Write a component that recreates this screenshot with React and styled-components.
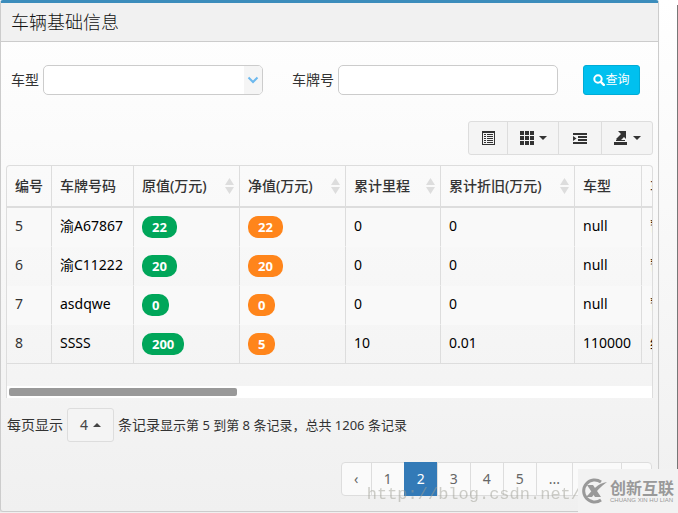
import React from 'react'
import styled, { createGlobalStyle, css } from 'styled-components'

const GlobalStyle = createGlobalStyle`
    * {
        box-sizing: border-box;
    }

    body {
        margin: 0;
        color: #333;
        background: linear-gradient(#fff, #f0f0f0) no-repeat #f0f0f0;
        font-family: 'Noto Sans', 'Noto Sans CJK SC', sans-serif;
        font-size: 14px;
        line-height: 20px;
    }

    button,
    input,
    select {
        font: inherit;
        color: inherit;
    }
`

const Page = styled.div`
    display: flex;
    overflow: hidden;
`

const Gutter = styled.div`
    flex: 0 0 19px;
    margin-top: 5px;
    border-right: 1px solid #777;
`

const Panel = styled.section`
    flex: 1;
    min-width: 0;
    border: 1px solid #ccc;
    border-top: 3px solid #3c8dbc;
    border-radius: 3px;
    box-shadow: 0 1px 1px rgba(0, 0, 0, 0.1);
`

const PanelHeader = styled.header`
    padding: 8px 10px;
    background: #f1f1f1;
    border-bottom: 1px solid #ccc;
`

const Title = styled.h3`
    margin: 0;
    color: #111;
    font-size: 18px;
    font-weight: 300;
    line-height: 22px;
`

const PanelBody = styled.div`
    padding: 23px 5px 15px;
`

const SearchForm = styled.form`
    display: flex;
    align-items: center;
    padding-left: 5px;
`

const Field = styled.div`
    display: flex;
    align-items: center;
    gap: 4px;
    margin-right: ${(props) => props.$gap}px;
`

const control = css`
    width: 220px;
    height: 30px;
    padding: 0 8px;
    background: #fff;
    border: 1px solid #ccc;
    border-radius: 5px;
    outline: none;
`

const TextInput = styled.input`
    ${control}
`

const SelectBox = styled.div`
    display: grid;
    grid-template-columns: 1fr 18px;
    align-items: center;
    overflow: hidden;
    ${control}
    padding: 0;
`

const Select = styled.select`
    grid-area: 1 / 1 / 2 / 3;
    height: 28px;
    border: 0;
    background: linear-gradient(#f5f5f5, #f5f5f5) no-repeat right / 18px 100%;
    appearance: none;
    outline: none;
`

const SelectArrow = styled.svg`
    grid-area: 1 / 2;
    justify-self: center;
    pointer-events: none;
`

const SearchButton = styled.button`
    display: flex;
    align-items: center;
    justify-content: center;
    width: 57px;
    height: 30px;
    padding: 0;
    color: #fff;
    font-size: 12px;
    background: #00c0ef;
    border: 1px solid #00acd6;
    border-radius: 3px;
`

const Toolbar = styled.div`
    display: flex;
    justify-content: flex-end;
    margin: 26px 0 10px;
`

const ToolButton = styled.button`
    display: flex;
    align-items: center;
    justify-content: center;
    gap: 5px;
    width: ${(props) => (props.$menu ? 52 : 40)}px;
    height: 34px;
    padding: 0;
    color: #333;
    background: #f4f4f4;
    border: 1px solid #ddd;

    & + & {
        margin-left: -1px;
    }

    &:first-child {
        border-radius: 3px 0 0 3px;
    }

    &:last-child {
        border-radius: 0 3px 3px 0;
    }

    &:nth-child(3) {
        width: 44px;
    }
`

const TableBox = styled.div`
    overflow: hidden;
    border: 1px solid #ddd;
    border-bottom: 0;
    border-radius: 4px 4px 0 0;
`

const Table = styled.table`
    width: 1800px;
    table-layout: fixed;
    border-collapse: separate;
    border-spacing: 0;
    margin-bottom: 22px;
`

const Th = styled.th`
    padding: 10px 8px;
    text-align: left;
    white-space: nowrap;
    font-weight: 500;
    border-right: 1px solid #ddd;
    border-bottom: 2px solid #ddd;
`

const ThInner = styled.div`
    display: flex;
    align-items: center;
    justify-content: space-between;
    margin-right: -3px;
`

const Row = styled.tr`
    background: ${(props) => (props.$odd ? '#f9f9f9' : 'transparent')};

    &:last-child td {
        border-bottom-color: #ddd;
    }
`

const Td = styled.td`
    padding: 7px 8px 8px;
    color: ${(props) => (props.$muted ? '#333' : '#000')};
    line-height: 22px;
    vertical-align: top;
    white-space: nowrap;
    border-right: 1px solid #ddd;
    border-bottom: 1px solid transparent;
`

const Badge = styled.span`
    display: inline-block;
    margin-top: 1px;
    padding: 0 10px;
    color: #fff;
    font-size: 13px;
    font-weight: 700;
    line-height: 22px;
    vertical-align: top;
    background: ${(props) => props.$color};
    border-radius: 10px;
`

const ScrollTrack = styled.div`
    padding: 2px;
    background: #fff;
`

const ScrollThumb = styled.div`
    width: 228px;
    height: 8px;
    background: #999;
    border-radius: 2px;
`

const PageInfo = styled.div`
    display: flex;
    align-items: center;
    gap: 4px;
    margin: 10px 0 20px 1px;
`

const PageSize = styled.button`
    display: flex;
    align-items: center;
    justify-content: center;
    gap: 5px;
    width: 47px;
    height: 34px;
    padding: 0;
    color: #444;
    background: #f4f4f4;
    border: 1px solid #ddd;
    border-radius: 3px;
`

const Summary = styled.span`
    font-size: 13px;
`

const Pagination = styled.ul`
    display: flex;
    justify-content: flex-end;
    margin: 0 1px 0 0;
    padding: 0;
    list-style: none;
`

const PageLink = styled.a`
    display: block;
    min-width: 31px;
    margin-left: -1px;
    padding: 6px 12px;
    text-align: center;
    text-decoration: none;
    color: ${(props) => (props.$active ? '#fff' : '#666')};
    background: ${(props) => (props.$active ? '#337ab7' : '#fafafa')};
    border: 1px solid ${(props) => (props.$active ? '#337ab7' : '#ddd')};

    li:first-child & {
        border-radius: 4px 0 0 4px;
    }

    li:last-child & {
        border-radius: 0 4px 4px 0;
    }
`

const SiteUrl = styled.div`
    position: fixed;
    right: 97px;
    bottom: 6px;
    color: rgba(160, 160, 150, 0.5);
    font-family: 'Liberation Mono', monospace;
    font-size: 17px;
    line-height: 24px;
    pointer-events: none;
`

const Brand = styled.div`
    position: fixed;
    right: 0;
    bottom: 0;
    display: flex;
    align-items: center;
    gap: 3px;
    width: 100px;
    height: 44px;
    padding-left: 2px;
    color: #999;
    background: #f2f2f2;
`

const BrandName = styled.div`
    font-size: 16px;
    font-weight: 700;
    line-height: 18px;
    white-space: nowrap;
`

const BrandSub = styled.div`
    font-family: 'Liberation Sans', sans-serif;
    font-size: 6px;
    line-height: 6px;
    white-space: nowrap;
`

const Caret = ({ up }) => (
    <svg width="8" height="4" viewBox="0 0 8 4" fill="currentColor">
        <path d={up ? 'M0 4 4 0 8 4z' : 'M0 0h8L4 4z'} />
    </svg>
)

const SortIcon = () => (
    <svg width="9" height="16" viewBox="0 0 9 16" fill="#ddd">
        <path d="M0 7 4.5 0 9 7zM0 9h9l-4.500 7z" />
    </svg>
)

const SearchIcon = () => (
    <svg width="12" height="12" viewBox="0 0 12 12" fill="none" stroke="currentColor">
        <circle cx="5" cy="5" r="3.700" strokeWidth="2" />
        <path d="m7.800 7.800 3 3" strokeWidth="2.400" strokeLinecap="round" />
    </svg>
)

const ListIcon = () => (
    <svg width="13" height="14" viewBox="0 0 13 14" fill="currentColor">
        <path
            fillRule="evenodd"
            d="M0 0h13v14H0zM1 2v11h11V2zM2 3h2v1H2zM5 3h6v1H5zM2 5h2v1H2zM5 5h6v1H5zM2 7h2v1H2zM5 7h6v1H5zM2 9h2v1H2zM5 9h6v1H5zM2 11h2v1H2zM5 11h6v1H5z"
        />
    </svg>
)

const GridIcon = () => (
    <svg width="14" height="14" viewBox="0 0 14 14" fill="currentColor">
        {[0, 5, 10].map((y) => [0, 5, 10].map((x) => (
            <rect key={`${x}-${y}`} x={x} y={y} width="4" height="4" />
        )))}
    </svg>
)

const IndentIcon = () => (
    <svg width="14" height="11" viewBox="0 0 14 11" fill="currentColor">
        <path d="M0 0h14v2H0zM5 3h9v2H5zM5 6h9v2H5zM0 9h14v2H0zM0 3l3.500 2.500L0 8z" />
    </svg>
)

const ExportIcon = () => (
    <svg width="14" height="14" viewBox="0 0 14 14" fill="currentColor">
        <path d="M0 11h13v3H0zM2 9h9v1H2zM4 0h8v8L10 6 7 9H3L2 8 7 3z" />
    </svg>
)

const BrandIcon = () => (
    <svg width="27" height="26" viewBox="0 0 27 26" fill="none" stroke="currentColor">
        <path d="M21 4A11 11 0 1 0 21 22" strokeWidth="3" />
        <path d="M7 7h6l8 12h-6z" fill="currentColor" stroke="none" />
        <path d="M27 4C18 5 13 12 6 19h6C16 14 20 9 27 4z" fill="currentColor" stroke="none" />
    </svg>
)

const columns = [
    { name: '编号', width: 45 },
    { name: '车牌号码', width: 82 },
    { name: '原值(万元)', width: 106, sortable: true },
    { name: '净值(万元)', width: 106, sortable: true },
    { name: '累计里程', width: 95, sortable: true },
    { name: '累计折旧(万元)', width: 134, sortable: true },
    { name: '车型', width: 67 },
    { name: '车辆状态' },
]

const vehicles = [
    { id: 5, plate: '渝A67867', cost: 22, net: 22, mileage: 0, loss: 0, model: 'null', state: '暂无' },
    { id: 6, plate: '渝C11222', cost: 20, net: 20, mileage: 0, loss: 0, model: 'null', state: '暂无' },
    { id: 7, plate: 'asdqwe', cost: 0, net: 0, mileage: 0, loss: 0, model: 'null', state: '暂无' },
    { id: 8, plate: 'SSSS', cost: 200, net: 5, mileage: 10, loss: 0.01, model: '110000', state: '维修' },
]

const pages = ['‹', '1', '2', '3', '4', '5', '...', '302', '›']

const App = () => (
    <>
        <GlobalStyle />
        <Page>
            <Panel>
                <PanelHeader>
                    <Title>车辆基础信息</Title>
                </PanelHeader>
                <PanelBody>
                    <SearchForm onSubmit={(e) => e.preventDefault()}>
                        <Field $gap={29}>
                            <label htmlFor="model">车型</label>
                            <SelectBox>
                                <Select id="model" />
                                <SelectArrow width="12" height="8" viewBox="0 0 12 8" fill="none">
                                    <path d="m1.500 1.500 4.500 4.500 4.500-4.500" stroke="#6db9ee" strokeWidth="2" />
                                </SelectArrow>
                            </SelectBox>
                        </Field>
                        <Field $gap={25}>
                            <label htmlFor="plate">车牌号</label>
                            <TextInput id="plate" type="text" />
                        </Field>
                        <SearchButton type="submit">
                            <SearchIcon />
                            查询
                        </SearchButton>
                    </SearchForm>
                    <Toolbar>
                        <ToolButton aria-label="切换">
                            <ListIcon />
                        </ToolButton>
                        <ToolButton $menu aria-label="列">
                            <GridIcon />
                            <Caret />
                        </ToolButton>
                        <ToolButton aria-label="缩进">
                            <IndentIcon />
                        </ToolButton>
                        <ToolButton $menu aria-label="导出">
                            <ExportIcon />
                            <Caret />
                        </ToolButton>
                    </Toolbar>
                    <TableBox>
                        <Table>
                            <colgroup>
                                {columns.map((col) => (
                                    <col key={col.name} width={col.width} />
                                ))}
                            </colgroup>
                            <thead>
                                <tr>
                                    {columns.map((col) => (
                                        <Th key={col.name}>
                                            <ThInner>
                                                {col.name}
                                                {col.sortable && <SortIcon />}
                                            </ThInner>
                                        </Th>
                                    ))}
                                </tr>
                            </thead>
                            <tbody>
                                {vehicles.map((item, i) => (
                                    <Row key={item.id} $odd={i % 2 === 0}>
                                        <Td $muted>{item.id}</Td>
                                        <Td>{item.plate}</Td>
                                        <Td>
                                            <Badge $color="#00a65a">{item.cost}</Badge>
                                        </Td>
                                        <Td>
                                            <Badge $color="#ff851b">{item.net}</Badge>
                                        </Td>
                                        <Td>{item.mileage}</Td>
                                        <Td>{item.loss}</Td>
                                        <Td>{item.model}</Td>
                                        <Td>{item.state}</Td>
                                    </Row>
                                ))}
                            </tbody>
                        </Table>
                        <ScrollTrack>
                            <ScrollThumb />
                        </ScrollTrack>
                    </TableBox>
                    <PageInfo>
                        每页显示
                        <PageSize>
                            4 <Caret up />
                        </PageSize>
                        <span>
                            条记录<Summary>显示第 5 到第 8 条记录，总共 1206 条记录</Summary>
                        </span>
                    </PageInfo>
                    <Pagination>
                        {pages.map((page) => (
                            <li key={page}>
                                <PageLink href="#" $active={page === '2'}>
                                    {page}
                                </PageLink>
                            </li>
                        ))}
                    </Pagination>
                </PanelBody>
            </Panel>
            <Gutter />
        </Page>
        <SiteUrl>http://blog.csdn.net/</SiteUrl>
        <Brand>
            <BrandIcon />
            <div>
                <BrandName>创新互联</BrandName>
                <BrandSub>CHUANG XIN HU LIAN</BrandSub>
            </div>
        </Brand>
    </>
)

export default App
